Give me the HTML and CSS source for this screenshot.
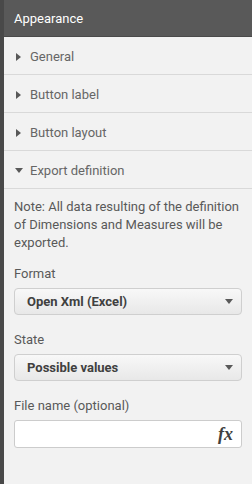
FILE: index.html
```html
<!DOCTYPE html>
<html>
<head>
<meta charset="utf-8">
<link rel="stylesheet" href="styles.css">
</head>
<body>
<div class="panel">
  <div class="header">Appearance</div>
  <div class="row"><span class="tri right"></span>General</div>
  <div class="row"><span class="tri right"></span>Button label</div>
  <div class="row"><span class="tri right"></span>Button layout</div>
  <div class="row"><span class="tri down"></span>Export definition</div>
  <div class="content">
    <p class="note">Note: All data resulting of the definition of Dimensions and Measures will be exported.</p>
    <div class="field">
      <label class="label">Format</label>
      <div class="select"><span>Open Xml (Excel)</span><span class="caret"></span></div>
    </div>
    <div class="field">
      <label class="label">State</label>
      <div class="select"><span>Possible values</span><span class="caret"></span></div>
    </div>
    <div class="field">
      <label class="label">File name (optional)</label>
      <div class="input"><span class="fx">fx</span></div>
    </div>
  </div>
</div>
</body>
</html>
```
FILE: styles.css
```css
html, body {
  margin: 0;
  padding: 0;
  background: #f2f2f2;
}
.panel {
  width: 252px;
  height: 484px;
  box-sizing: border-box;
  border-left: 4px solid #494949;
  background: #f2f2f2;
  font-family: Roboto, "Open Sans", sans-serif;
  font-size: 13px;
  color: #595959;
}
.header {
  height: 37px;
  box-sizing: border-box;
  background: #595959;
  border-bottom: 1px solid #4a4a4a;
  color: #ffffff;
  padding-left: 10px;
  display: flex;
  align-items: center;
  font-size: 13px;
}
.row {
  height: 38px;
  box-sizing: border-box;
  border-bottom: 1px solid #d9d9d9;
  display: flex;
  align-items: center;
  padding-left: 12px;
  padding-top: 2px;
  color: #666666;
}
.tri {
  width: 0;
  height: 0;
}
.tri.right {
  border-top: 4px solid transparent;
  border-bottom: 4px solid transparent;
  border-left: 5px solid #595959;
  margin-right: 9px;
}
.tri.down {
  border-left: 4px solid transparent;
  border-right: 4px solid transparent;
  border-top: 5px solid #595959;
  margin-left: -1px;
  margin-right: 7px;
}
.content {
  padding: 0 10px;
}
.note {
  margin: 9px 0 0 0;
  line-height: 18px;
  color: #595959;
}
.field {
  margin-top: 13px;
  display: flex;
  flex-direction: column;
}
.field + .field {
  margin-top: 16px;
}
.label {
  line-height: 18px;
  margin-bottom: 5px;
  color: #595959;
}
.select {
  height: 27px;
  box-sizing: border-box;
  border: 1px solid #cfcfcf;
  border-radius: 4px;
  background: linear-gradient(#f8f8f8, #e8e8e8);
  display: flex;
  align-items: center;
  justify-content: space-between;
  padding: 0 8px 0 12px;
  font-weight: bold;
  color: #404040;
}
.caret {
  width: 0;
  height: 0;
  border-left: 4px solid transparent;
  border-right: 4px solid transparent;
  border-top: 5px solid #595959;
}
.input {
  height: 28px;
  box-sizing: border-box;
  border: 1px solid #cccccc;
  border-radius: 3px;
  background: #ffffff;
  display: flex;
  align-items: center;
  justify-content: flex-end;
  padding-right: 8px;
}
.fx {
  font-family: "Liberation Serif", serif;
  font-style: italic;
  font-weight: bold;
  font-size: 18px;
  color: #404040;
}
```
